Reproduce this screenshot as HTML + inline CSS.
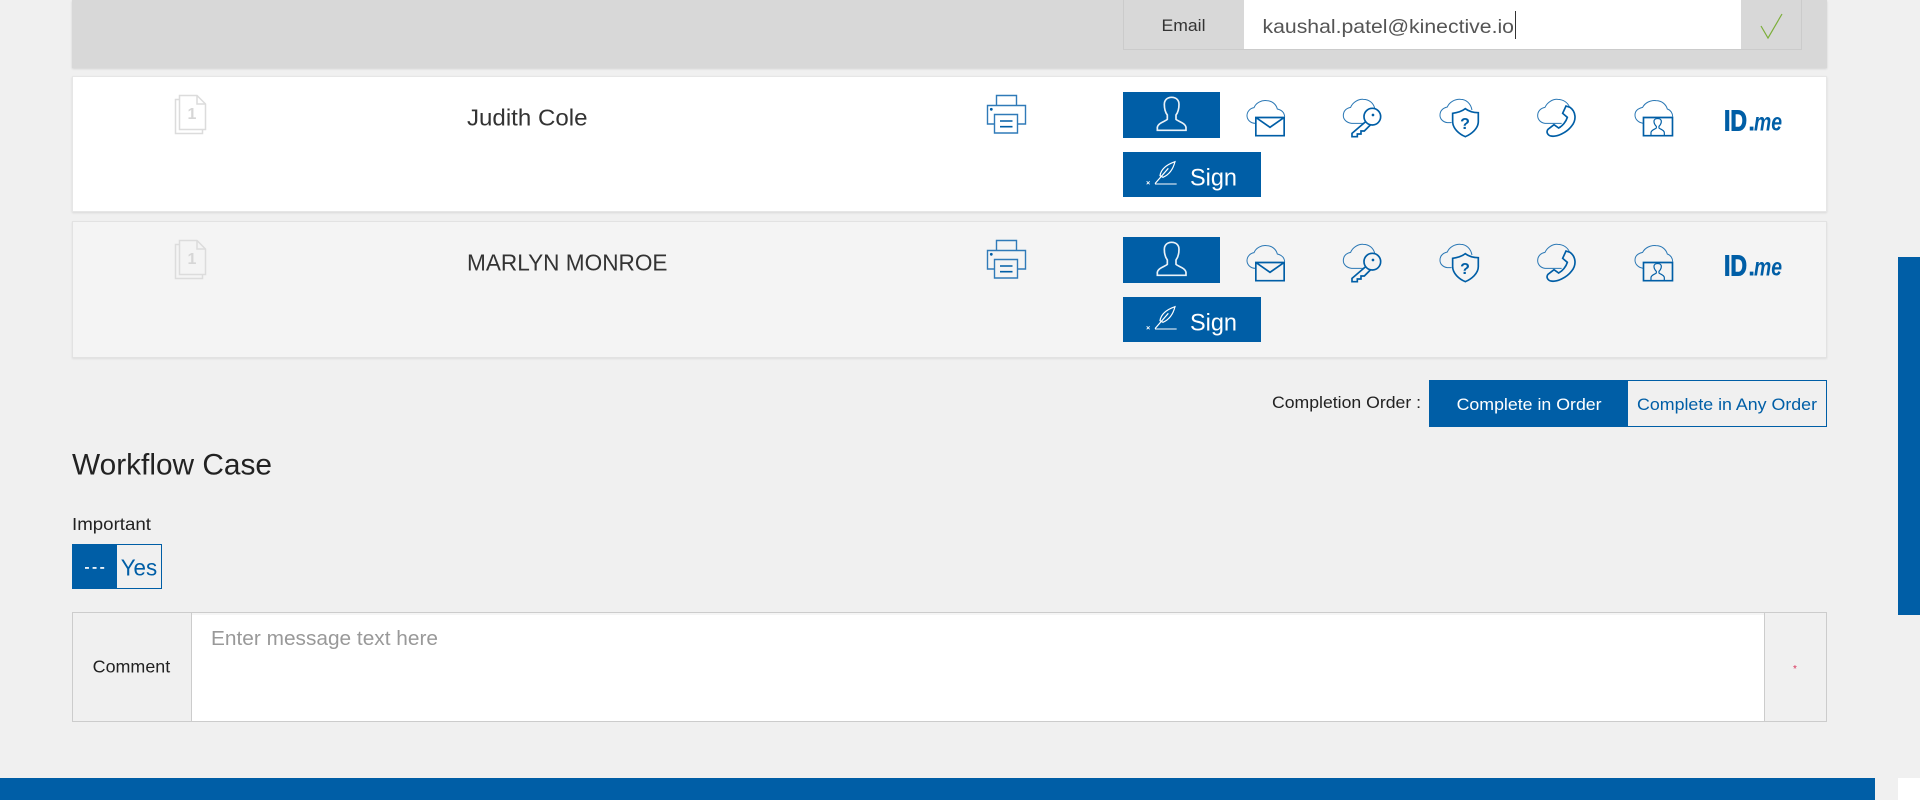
<!DOCTYPE html>
<html lang="en"><head><meta charset="utf-8"><title>Workflow Case</title>
<style>
html,body{margin:0;padding:0;width:1920px;height:800px;overflow:hidden;background:#f0f0f0}
div{position:absolute;box-sizing:border-box}
svg{position:absolute;left:0;top:0}
text{font-family:"Liberation Sans",sans-serif}
</style></head><body>
<div style="left:72px;top:0;width:1755px;height:68px;background:#d8d8d8;box-shadow:0 1px 2px rgba(0,0,0,.12)"></div>
<div style="left:1123px;top:-1px;width:679px;height:51px;background:#d8d8d8;border:1px solid #cbcbcb"></div>
<div style="left:1244px;top:0;width:497px;height:49px;background:#fff"></div>
<div style="left:72px;top:76px;width:1755px;height:136px;background:#fff;border:1px solid #e6e6e6;box-shadow:0 1px 2px rgba(0,0,0,.1)"></div>
<div style="left:72px;top:221px;width:1755px;height:137px;background:#f4f4f4;border:1px solid #e2e2e2;box-shadow:0 1px 2px rgba(0,0,0,.08)"></div>
<div style="left:1123px;top:92px;width:97px;height:46px;background:#005ea6"></div>
<div style="left:1123px;top:152px;width:138px;height:45px;background:#005ea6"></div>
<div style="left:1123px;top:237px;width:97px;height:46px;background:#005ea6"></div>
<div style="left:1123px;top:297px;width:138px;height:45px;background:#005ea6"></div>
<div style="left:1429px;top:380px;width:398px;height:47px;border:1px solid #005ea6"></div>
<div style="left:1429px;top:380px;width:199px;height:47px;background:#005ea6"></div>
<div style="left:72px;top:544px;width:90px;height:45px;border:1px solid #005ea6"></div>
<div style="left:72px;top:544px;width:45px;height:45px;background:#005ea6"></div>
<div style="left:72px;top:612px;width:1755px;height:110px;border:1px solid #ccc"></div>
<div style="left:192px;top:613px;width:1572px;height:108px;background:#fff;border-top:2px solid #f5f5f5"></div>
<div style="left:191px;top:613px;width:1px;height:108px;background:#ccc"></div>
<div style="left:1764px;top:613px;width:1px;height:108px;background:#ccc"></div>
<div style="left:0;top:778px;width:1875px;height:22px;background:#005ea6"></div>
<div style="left:1898px;top:257px;width:22px;height:358px;background:#005ea6"></div>
<div style="left:1898px;top:778px;width:22px;height:22px;background:#fff"></div>
<div style="left:1515px;top:11px;width:1px;height:28px;background:#333"></div>

<svg width="1920" height="800" viewBox="0 0 1920 800" fill="none">
<path d="M1761 26L1768 38L1782 14" stroke="#7cae3a" stroke-width="1.2"/>
<g id="r">
 <path d="M179.500 95.500H197L205.500 104V129.500H179.500ZM197 95.500V104H205.500M179 99.500H175.500V133.500H202.500V129.500" stroke="#dcdcdc" stroke-width="1.5"/>
 <path d="M996.500 105V95.500H1016.500V105M994 124H987.500V105.500H1025.500V124H1018M994.500 114.500H1017.500V133H994.500Z" stroke="#2f7ab8" stroke-width="1.400"/>
 <path d="M1000 121H1012.500M1000 126.700H1012.500" stroke="#005ea6" stroke-width="1.600"/>
 <circle cx="991.300" cy="109.300" r="1.400" fill="#005ea6"/>
 <g transform="translate(1120 85) scale(.3333)" fill="none">
  <path d="M155 37C140 37 133 47 133 58C133 72 136 82 142 90V103C135 110 115 113 112 127V136H198V127C195 113 175 110 168 103V90C174 82 177 72 177 58C177 47 170 37 155 37Z" stroke="#eaf2f8" stroke-width="5"/>
  <path d="M105 297H170" stroke="#fff" stroke-width="3"/>
  <path d="M80 289L89 298M89 289L80 298" stroke="#fff" stroke-width="2.500"/>
  <path d="M165 230C142 238 123 252 120 272L129 277C150 268 160 250 165 230ZM105 296L145 250" stroke="#fff" stroke-width="3.600"/>
 </g>
 <g transform="translate(1220 80) scale(.3333)">
  <path d="M107 130C90 130 81 118 81 107C81 95 90 85 102 83C108 68 125 60 140 62C155 62 168 72 172 87C185 90 193 98 194 110" stroke="#2b78b5" stroke-width="3"/>
  <path d="M107.500 112.500H192.500V167H107.500ZM107.500 112.500L150 142L192.500 112.500" stroke="#005ea6" stroke-width="5"/>
  <path d="M432 130H395C378 128 370 117 370 107C370 92 380 84 392 82C398 67 415 57 430 58C448 58 460 70 464 84" stroke="#2b78b5" stroke-width="3"/>
  <circle cx="457" cy="110" r="25" stroke="#005ea6" stroke-width="5"/>
  <circle cx="459" cy="105" r="4" fill="#005ea6"/>
  <path d="M438 124L396 160V170H412V162H423V153H433L451 135" stroke="#005ea6" stroke-width="5"/>
  <path d="M695 128H682C668 126 660 116 660 106C660 92 670 84 682 81C688 66 705 57 722 58C738 58 752 70 756 90" stroke="#2b78b5" stroke-width="3"/>
  <path d="M736 86C748 95 762 98 775 98V125C775 145 755 162 736 170C717 162 698 145 698 125V100C712 98 725 95 736 86Z" stroke="#005ea6" stroke-width="5"/>
 </g>
 <g transform="translate(1520 80) scale(.3333)">
  <path d="M125 130H75C60 128 53 117 53 107C53 93 63 84 75 82C82 67 98 57 113 58C130 58 143 68 148 80" stroke="#2b78b5" stroke-width="3"/>
  <path d="M138 78L150 82C168 95 170 120 155 138C140 158 110 172 92 168C82 165 78 155 84 148L102 134L116 144C128 138 138 125 142 112L128 100Z" stroke="#005ea6" stroke-width="5"/>
  <path d="M370 130C355 128 345 118 345 105C345 92 355 85 368 82C375 68 392 60 408 62C425 62 438 73 442 87C452 90 458 100 458 110" stroke="#2b78b5" stroke-width="3"/>
  <path d="M370.500 112.500H457.500V167H370.500Z" stroke="#005ea6" stroke-width="5"/>
  <path d="M393 165V158C393 150 405 148 409 144V139C404 134 402 129 402 124C402 113 424 113 424 124C424 129 422 134 417 139V144C421 148 433 150 433 158V165" stroke="#005ea6" stroke-width="3.500"/>
 </g>
</g>
<use href="#r" transform="translate(0 145)"/>

<g fill="#333">
<text x="1161.500" y="31" font-size="17" textLength="44" lengthAdjust="spacingAndGlyphs">Email</text>
<text x="1262.500" y="33" font-size="19.500" fill="#555" textLength="251.500" lengthAdjust="spacingAndGlyphs">kaushal.patel@kinective.io</text>
<text x="467" y="125.700" font-size="23" textLength="120.500" lengthAdjust="spacingAndGlyphs">Judith Cole</text>
<text x="467" y="270.700" font-size="23" textLength="200.500" lengthAdjust="spacingAndGlyphs">MARLYN MONROE</text>
</g>
<g fill="#d6d6d6" font-weight="700" font-size="16" text-anchor="middle">
<text x="192" y="119">1</text>
<text x="192" y="264">1</text>
</g>
<g fill="#fff" font-size="24">
<text x="1190" y="185.700" textLength="47" lengthAdjust="spacingAndGlyphs">Sign</text>
<text x="1190" y="330.700" textLength="47" lengthAdjust="spacingAndGlyphs">Sign</text>
</g>
<g fill="#005ea6" font-weight="700" text-anchor="middle">
<text x="1465" y="129" font-size="16">?</text>
<text x="1465" y="274" font-size="16">?</text>
</g>
<g fill="#005ea6">
<text x="1724" y="130.700" font-size="29" font-weight="700" textLength="23" lengthAdjust="spacingAndGlyphs" stroke="#005ea6" stroke-width="1">ID</text>
<text x="1748" y="130.700" font-size="26" font-weight="700">.</text>
<text x="1754" y="130.700" font-size="25" font-weight="700" font-style="italic" textLength="28" lengthAdjust="spacingAndGlyphs">me</text>
<text x="1724" y="275.700" font-size="29" font-weight="700" textLength="23" lengthAdjust="spacingAndGlyphs" stroke="#005ea6" stroke-width="1">ID</text>
<text x="1748" y="275.700" font-size="26" font-weight="700">.</text>
<text x="1754" y="275.700" font-size="25" font-weight="700" font-style="italic" textLength="28" lengthAdjust="spacingAndGlyphs">me</text>
</g>
<text x="1272" y="408" font-size="17" fill="#222" textLength="149" lengthAdjust="spacingAndGlyphs">Completion Order :</text>
<text x="1456.600" y="410" font-size="17" fill="#fff" textLength="145" lengthAdjust="spacingAndGlyphs">Complete in Order</text>
<text x="1637" y="410" font-size="17" fill="#005ea6" textLength="180" lengthAdjust="spacingAndGlyphs">Complete in Any Order</text>
<text x="72" y="474.500" font-size="30" fill="#222" textLength="200" lengthAdjust="spacingAndGlyphs">Workflow Case</text>
<text x="72" y="530" font-size="17.500" fill="#222" textLength="79" lengthAdjust="spacingAndGlyphs">Important</text>
<text x="84.600" y="571.500" font-size="14" fill="#fff" stroke="#fff" stroke-width=".5" letter-spacing="3">---</text>
<text x="120.700" y="575.700" font-size="23.500" fill="#005ea6" textLength="36.500" lengthAdjust="spacingAndGlyphs">Yes</text>
<text x="92.700" y="672.700" font-size="17.500" fill="#222" textLength="77.500" lengthAdjust="spacingAndGlyphs">Comment</text>
<text x="211" y="645" font-size="20" fill="#999" textLength="227" lengthAdjust="spacingAndGlyphs">Enter message text here</text>
<text x="1795" y="672" font-size="10" fill="#d9345a" text-anchor="middle">*</text>
</svg>
</body></html>
